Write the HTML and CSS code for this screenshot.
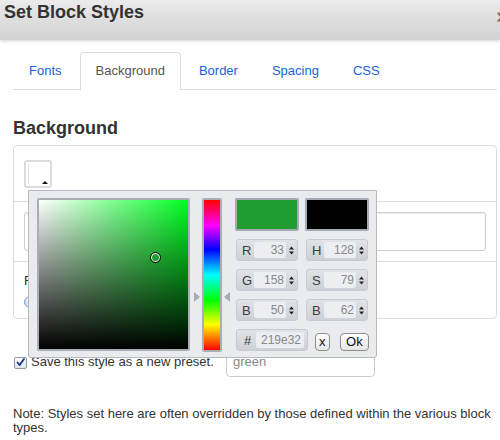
FILE: index.html
```html
<!DOCTYPE html>
<html>
<head>
<meta charset="utf-8">
<link rel="stylesheet" href="styles.css">
</head>
<body>
<header class="hdr">
  <h1 class="title">Set Block Styles</h1>
  <span class="close">×</span>
</header>
<div class="content">
  <ul class="tabs">
    <li class="tab">Fonts</li>
    <li class="tab active">Background</li>
    <li class="tab">Border</li>
    <li class="tab">Spacing</li>
    <li class="tab">CSS</li>
  </ul>
  <h2 class="heading">Background</h2>
  <div class="panel">
    <div class="row r1">
      <div class="swatch"><span class="swatch-inner"></span><span class="swatch-tri"></span></div>
    </div>
    <div class="row r2">
      <div class="wide"></div>
    </div>
    <div class="row r3">
      <div class="lbl">Fixed Position</div>
      <div class="radio-row"><span class="radio"></span><span class="lbl">Scroll</span></div>
    </div>
  </div>
  <div class="preset">
    <label class="chk"><span class="box"><svg width="13" height="13" viewBox="0 0 13 13"><path d="M3 6.5 L5.5 9.5 L10.5 2.5" fill="none" stroke="#1d3f8a" stroke-width="2.2" stroke-linecap="round" stroke-linejoin="round"/></svg></span>Save this style as a new preset.</label>
    <div class="name">green</div>
  </div>
  <p class="note">Note: Styles set here are often overridden by those defined within the various block types.</p>
</div>

<div class="picker">
  <div class="sv">
    <span class="marker"></span>
  </div>
  <div class="huewrap">
    <div class="hue"></div>
    <span class="arr arr-l"></span>
    <span class="arr arr-r"></span>
  </div>
  <div class="side">
    <div class="sw sw-new"></div>
    <div class="sw sw-old"></div>
    <div class="field"><span class="k">R</span><span class="v">33</span><span class="spin"><svg width="5" height="9" viewBox="0 0 5 9"><path d="M0 3.5 L2.5 0.5 L5 3.5Z M0 5.5 L2.5 8.5 L5 5.5Z" fill="#222"/></svg></span></div>
    <div class="field"><span class="k">H</span><span class="v">128</span><span class="spin"><svg width="5" height="9" viewBox="0 0 5 9"><path d="M0 3.5 L2.5 0.5 L5 3.5Z M0 5.5 L2.5 8.5 L5 5.5Z" fill="#222"/></svg></span></div>
    <div class="field"><span class="k">G</span><span class="v">158</span><span class="spin"><svg width="5" height="9" viewBox="0 0 5 9"><path d="M0 3.5 L2.5 0.5 L5 3.5Z M0 5.5 L2.5 8.5 L5 5.5Z" fill="#222"/></svg></span></div>
    <div class="field"><span class="k">S</span><span class="v">79</span><span class="spin"><svg width="5" height="9" viewBox="0 0 5 9"><path d="M0 3.5 L2.5 0.5 L5 3.5Z M0 5.5 L2.5 8.5 L5 5.5Z" fill="#222"/></svg></span></div>
    <div class="field"><span class="k">B</span><span class="v">50</span><span class="spin"><svg width="5" height="9" viewBox="0 0 5 9"><path d="M0 3.5 L2.5 0.5 L5 3.5Z M0 5.5 L2.5 8.5 L5 5.5Z" fill="#222"/></svg></span></div>
    <div class="field"><span class="k">B</span><span class="v">62</span><span class="spin"><svg width="5" height="9" viewBox="0 0 5 9"><path d="M0 3.5 L2.5 0.5 L5 3.5Z M0 5.5 L2.5 8.5 L5 5.5Z" fill="#222"/></svg></span></div>
    <div class="lastrow">
      <div class="hex"><span class="k">#</span><span class="hv">219e32</span></div>
      <button class="btn btn-x">x</button>
      <button class="btn btn-ok">Ok</button>
    </div>
  </div>
</div>
</body>
</html>
```
FILE: styles.css
```css
* { box-sizing: border-box; }
html, body { margin: 0; padding: 0; background: #fff; }
body {
  font-family: "Liberation Sans", Arial, sans-serif;
  font-size: 13px;
  color: #333;
  width: 500px;
  height: 440px;
  overflow: hidden;
  position: relative;
}
.hdr {
  height: 40px;
  background: linear-gradient(#ebebeb, #d1d1d1);
  box-shadow: 0 1px 3px rgba(0,0,0,0.18);
  display: flex;
  justify-content: space-between;
  align-items: flex-start;
  padding: 1px 0 0 4px;
}
.title {
  margin: 0;
  font-size: 18px;
  line-height: 22px;
  font-weight: bold;
  color: #333;
}
.close {
  font-size: 20px;
  line-height: 20px;
  color: #7a7478;
  font-weight: bold;
  margin-top: 6px;
  margin-right: -8px;
}
.content { padding: 0 3px 0 13px; }
.tabs {
  list-style: none;
  margin: 12px 0 0;
  padding: 0;
  display: flex;
  border-bottom: 1px solid #ddd;
}
.tab {
  padding: 8px 15px;
  line-height: 20px;
  border: 1px solid transparent;
  border-bottom: 0;
  margin-right: 2px;
  color: #1a5fd6;
  border-radius: 4px 4px 0 0;
}
.tab.active {
  color: #555;
  border-color: #ddd;
  background: #fff;
  margin-bottom: -1px;
  padding-bottom: 9px;
}
.heading {
  margin: 28px 0 7px;
  font-size: 18px;
  line-height: 20px;
  font-weight: bold;
  color: #333;
}
.panel {
  border: 1px solid #ddd;
  border-radius: 4px;
}
.row { padding: 10px 10px; }
.row + .row { border-top: 1px solid #ddd; }
.r1 { height: 55px; padding-top: 14px; }
.r2 { height: 60px; }
.r3 { height: 57px; padding-top: 10px; }
.swatch {
  width: 28px;
  height: 28px;
  border: 2px solid #dcdcdc;
  border-radius: 3px;
  position: relative;
  background: #fff;
}
.swatch-inner {
  position: absolute;
  left: 2px;
  top: 2px;
  bottom: 2px;
  width: 2px;
  border-left: 1px solid #e2e2e2;
}
.swatch-tri {
  position: absolute;
  right: 2px;
  bottom: 2px;
  width: 0;
  height: 0;
  border-left: 3px solid transparent;
  border-right: 3px solid transparent;
  border-bottom: 3px solid #111;
}
.wide {
  height: 39px;
  border: 1px solid #ccc;
  border-radius: 3px;
  box-shadow: inset 0 1px 1px rgba(0,0,0,0.07);
}
.lbl { line-height: 18px; color: #333; }
.radio-row { display: flex; align-items: center; gap: 4px; margin-top: 3px; }
.radio {
  width: 12px;
  height: 12px;
  border-radius: 50%;
  border: 1px solid #7a9bd0;
  background: linear-gradient(#eaf1fb, #c9d9f2);
}
.preset {
  margin-top: 28px;
  display: flex;
  align-items: center;
  height: 30px;
}
.chk {
  display: flex;
  align-items: center;
  gap: 4px;
  width: 213px;
  line-height: 16px;
  color: #333;
  padding-left: 1px;
}
.box {
  width: 13px;
  height: 12px;
  border: 1px solid #8f98ad;
  border-radius: 2px;
  background: linear-gradient(#fdfdfd, #dfe5ef);
  display: flex;
  align-items: center;
  justify-content: center;
  margin-top: 1px;
}
.box svg { display: block; margin-top: -1px; }
.name {
  width: 149px;
  height: 30px;
  border: 1px solid #ccc;
  border-radius: 4px;
  padding: 0 6px;
  line-height: 28px;
  color: #888;
}
.note {
  margin: 30px 0 0;
  line-height: 14px;
  color: #333;
}

/* Colour picker overlay */
.picker {
  position: absolute;
  left: 28px;
  top: 190px;
  width: 349px;
  height: 168px;
  background: #e9ebee;
  border: 1px solid #b6b9bf;
  border-radius: 0 0 3px 3px;
  padding: 7px 0 0 8px;
  display: flex;
  align-items: flex-start;
}
.sv {
  width: 153px;
  height: 153px;
  border: 2px solid #a9adb4;
  border-radius: 2px;
  position: relative;
  background:
    linear-gradient(to bottom, rgba(0,0,0,0), #000),
    linear-gradient(to right, #fff, rgba(255,255,255,0)),
    #00ff22;
}
.marker {
  position: absolute;
  left: 111px;
  top: 52px;
  width: 11px;
  height: 11px;
  border-radius: 50%;
  border: 1px solid #000;
  box-shadow: inset 0 0 0 1px #fff;
}
.huewrap {
  width: 45px;
  height: 154px;
  padding-left: 12px;
  position: relative;
}
.hue {
  width: 20px;
  height: 154px;
  border: 2px solid #a9adb4;
  border-radius: 2px;
  background: linear-gradient(to bottom, #f00, #f0f 17%, #00f 33%, #0ff 50%, #0f0 67%, #ff0 83%, #f00);
}
.arr {
  position: absolute;
  top: 94px;
  width: 0;
  height: 0;
  border-top: 5px solid transparent;
  border-bottom: 5px solid transparent;
}
.arr-l { left: 4px; border-left: 6px solid #a8acb3; }
.arr-r { left: 34px; border-right: 6px solid #a8acb3; }
.side {
  display: grid;
  grid-template-columns: 64px 64px;
  column-gap: 6px;
  row-gap: 8px;
  grid-auto-rows: 22px;
  grid-template-rows: 33px;
  margin-top: 0;
}
.sw {
  height: 33px;
  border: 2px solid #a7abb3;
  border-radius: 2px;
}
.sw-new { background: #219e32; }
.sw-old { background: #000; }
.field {
  margin-left: 1px;
  width: 62px;
  height: 22px;
  border: 1px solid #c8ccd2;
  border-radius: 3px;
  background: linear-gradient(#e0e3e8, #cdd1d7);
  display: flex;
  align-items: center;
  padding: 0 3px 0 5px;
}
.k {
  width: 13px;
  font-size: 13px;
  color: #3c3c3c;
}
.v {
  width: 33px;
  height: 16px;
  background: #eceef2;
  border-radius: 2px;
  font-size: 12px;
  line-height: 16px;
  color: #8a8a8a;
  text-align: right;
  padding-right: 2px;
}
.spin { display: flex; margin-left: 3px; }
.spin svg { display: block; }
.lastrow {
  grid-column: 1 / span 2;
  display: flex;
  align-items: center;
}
.hex {
  margin-left: 1px;
  width: 72px;
  height: 22px;
  border: 1px solid #c8ccd2;
  border-radius: 3px;
  background: linear-gradient(#e0e3e8, #cdd1d7);
  display: flex;
  align-items: center;
  padding: 0 3px 0 7px;
}
.hex .k { width: 12px; }
.hv {
  width: 48px;
  height: 16px;
  background: #eceef2;
  border-radius: 2px;
  font-size: 12px;
  line-height: 16px;
  color: #8a8a8a;
  padding-left: 5px;
}
.btn {
  font-family: "Liberation Sans", Arial, sans-serif;
  font-size: 13px;
  height: 18px;
  padding: 0;
  border: 1px solid #8d8d8d;
  border-radius: 4px;
  background: linear-gradient(#ffffff, #e6e6e6);
  color: #111;
  line-height: 16px;
  margin-top: 3px;
}
.btn-x { width: 15px; margin-left: 7px; }
.btn-ok { width: 30px; margin-left: 10px; }
```
